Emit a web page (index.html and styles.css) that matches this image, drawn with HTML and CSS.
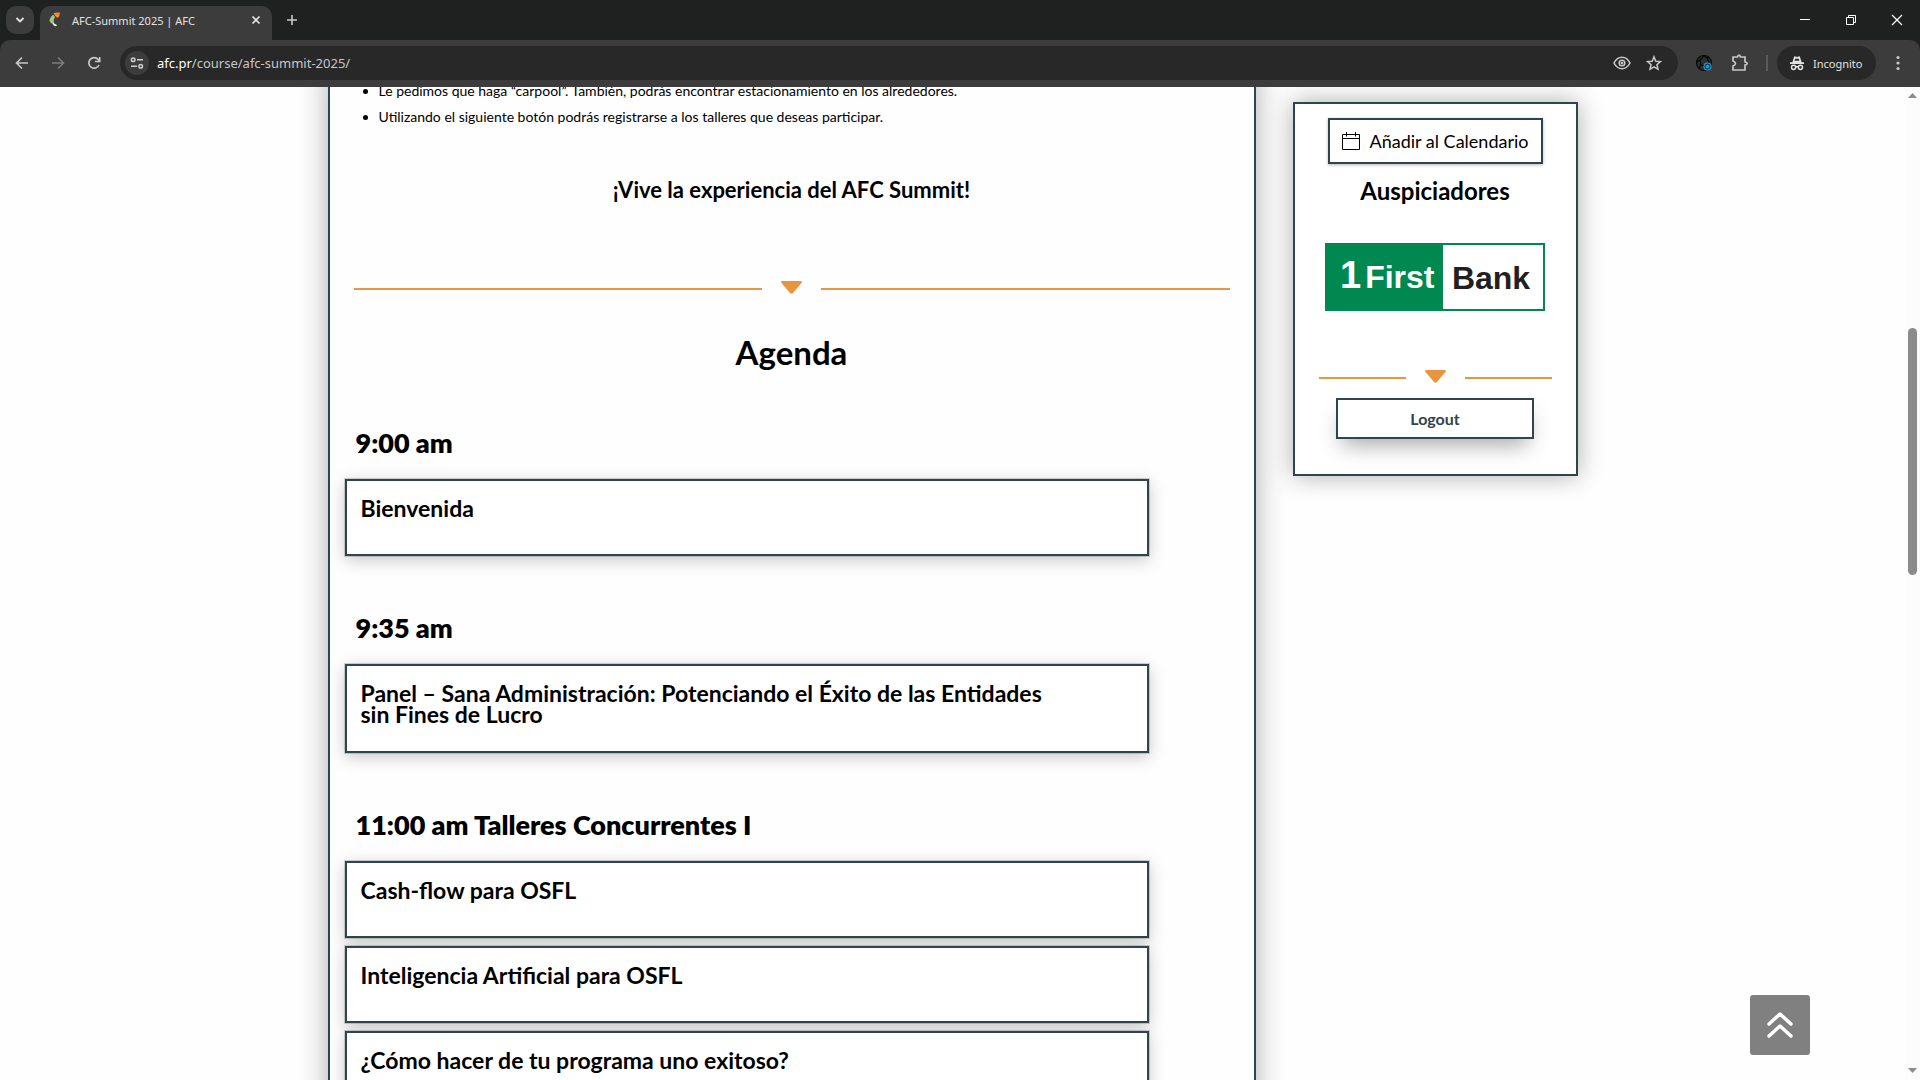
FILE: index.html
```html
<!DOCTYPE html>
<html lang="es">
<head>
<meta charset="utf-8">
<title>AFC-Summit 2025 | AFC</title>
<link rel="stylesheet" href="styles.css">
</head>
<body>
<header class="browser">
  <div class="tabs">
    <button class="tab-search" aria-label="Search tabs"><svg width="10" height="10" viewBox="0 0 10 10"><path d="M1.5 3l3.5 3.5L8.500 3" fill="none" stroke="#e3e3e3" stroke-width="1.8"/></svg></button>
    <div class="tab">
      <svg width="16" height="16" viewBox="0 0 16 16"><path d="M5.500 1.500Q7 0 11.800.5Q12 4.500 9.500 5.800Q8 5.500 5.500 1.500Z" fill="#f08c35"/><path d="M5 2.800Q8.200 5 5.800 7.500L5.500 12Q1.500 11 1.500 8Q2 5 5 2.800Z" fill="#a5c583"/><path d="M5 10Q6 12 9 13Q8 15 6 13.800Q4 12.500 5 10Z" fill="#fff"/></svg>
      <span class="tab-title">AFC-Summit 2025 | AFC</span>
      <button class="tab-close" aria-label="Close tab"><svg width="10" height="10" viewBox="0 0 10 10"><path d="M1.500 1.500l7 7m0-7l-7 7" stroke="#e3e3e3" stroke-width="1.700"/></svg></button>
    </div>
    <button class="new-tab" aria-label="New tab"><svg width="12" height="12" viewBox="0 0 12 12"><path d="M6 1v10M1 6h10" stroke="#c7c7c7" stroke-width="1.600"/></svg></button>
    <div class="window-buttons">
      <button aria-label="Minimize"><svg width="12" height="12" viewBox="0 0 12 12"><path d="M1 5.500h10" stroke="#fff"/></svg></button>
      <button aria-label="Restore"><svg width="12" height="12" viewBox="0 0 12 12"><path d="M1.500 3.500h7v7h-7zM3.500 3.500v-2h7v7h-2" fill="none" stroke="#fff"/></svg></button>
      <button aria-label="Close"><svg width="12" height="12" viewBox="0 0 12 12"><path d="M1 1l10 10M11 1L1 11" stroke="#fff" stroke-width="1.200"/></svg></button>
    </div>
  </div>
  <div class="toolbar">
    <button class="nav-button" aria-label="Back"><svg width="14" height="14" viewBox="0 0 14 14"><path d="M13 7H2M7 1.500L1.500 7L7 12.500" fill="none" stroke="#c7c7c7" stroke-width="1.700"/></svg></button>
    <button class="nav-button" aria-label="Forward"><svg width="14" height="14" viewBox="0 0 14 14"><path d="M1 7h11M7 1.500L12.500 7L7 12.500" fill="none" stroke="#7b7b7b" stroke-width="1.700"/></svg></button>
    <button class="nav-button" aria-label="Reload"><svg width="14" height="14" viewBox="0 0 14 14"><path d="M12 9A5.300 5.300 0 1 1 11.200 3.500L12.500 5M12.700 1v4.500H8" fill="none" stroke="#c7c7c7" stroke-width="1.700"/></svg></button>
    <div class="address">
      <button class="site-info" aria-label="Site information"><svg width="14" height="12" viewBox="0 0 14 12"><g fill="none" stroke="#d0d0d0" stroke-width="1.500"><circle cx="3.200" cy="2.700" r="1.800"/><path d="M7 2.700h6M1 9.300h6"/><circle cx="10.700" cy="9.300" r="1.800"/></g></svg></button>
      <div class="url" role="textbox" aria-label="Address" tabindex="0"><span class="url-host">afc.pr</span>/course/afc-summit-2025/</div>
      <button class="address-button" aria-label="Tracking protection"><svg width="18" height="14" viewBox="0 0 18 14"><g fill="none" stroke="#c7c7c7" stroke-width="1.600"><path d="M1 7Q4 1.300 9 1.300T17 7Q14 12.700 9 12.700T1 7Z"/><circle cx="9" cy="7" r="2.800"/></g><circle cx="9" cy="7" r="1.300" fill="#c7c7c7"/></svg></button>
      <button class="address-button" aria-label="Bookmark"><svg width="16" height="16" viewBox="0 0 16 16"><path d="M8 1.800l1.800 4.400 4.700.4-3.600 3.100 1.100 4.600L8 11.900l-4 2.400 1.100-4.600L1.500 6.600l4.700-.4z" fill="none" stroke="#c7c7c7" stroke-width="1.500"/></svg></button>
    </div>
    <button class="tool-button" aria-label="Extension"><svg width="18" height="18" viewBox="0 0 18 18"><circle cx="9" cy="9" r="7.500" fill="#2e3030" stroke="#080808" stroke-width="1.200"/><path d="M9 2L5 6l1 5 5 1 3-4-2-4zM2 8l3-2M6 11l-2 3M12 4l2-1" fill="none" stroke="#080808" stroke-width="1.200"/><circle cx="12.500" cy="12.500" r="4" fill="#16a5e0"/><circle cx="12.500" cy="12.500" r="2.400" fill="none" stroke="#12394c" stroke-width="1.200"/></svg></button>
    <button class="tool-button" aria-label="Extensions"><svg width="18" height="18" viewBox="0 0 18 18"><path d="M2 3h4.500q.3-1.800 1.500-1.800T9.500 3H14v5q2.200.3 2.200 1.500T14 11v5H2v-4q2.500-1 2.500-2.500T2 7z" fill="none" stroke="#c7c7c7" stroke-width="1.700"/></svg></button>
    <span class="separator"></span>
    <div class="incognito"><svg width="16" height="16" viewBox="0 0 16 16"><path d="M4.500 6.500L5.800 2.200l2.200.6 2.200-.6 1.300 4.300zM1 8.200h14" fill="none" stroke="#e3e3e3" stroke-width="1.700"/><g fill="none" stroke="#e3e3e3" stroke-width="1.500"><circle cx="4.600" cy="12.300" r="2.100"/><circle cx="11.400" cy="12.300" r="2.100"/><path d="M6.700 12q1.300-.8 2.600 0"/></g></svg>Incognito</div>
    <button class="menu-button" aria-label="Menu"><svg width="4" height="16" viewBox="0 0 4 16"><g fill="#c7c7c7"><circle cx="2" cy="2.500" r="1.600"/><circle cx="2" cy="8" r="1.600"/><circle cx="2" cy="13.500" r="1.600"/></g></svg></button>
  </div>
</header>
<div class="viewport">
  <div class="page">
    <main class="course">
      <ul class="notes">
        <li>Le pedimos que haga “carpool”. También, podrás encontrar estacionamiento en los alrededores.</li>
        <li>Utilizando el siguiente botón podrás registrarse a los talleres que deseas participar.</li>
      </ul>
      <p class="slogan">¡Vive la experiencia del AFC Summit!</p>
      <div class="divider"><svg width="21" height="13" viewBox="0 0 21 13"><path d="M1 0h19q1.500.5.500 2L12 12q-1.500 1.500-3 0L.5 2Q-.5.500 1 0z" fill="#e9953f"/></svg></div>
      <h1 class="agenda-title">Agenda</h1>
      <section class="slot">
        <h2>9:00 am</h2>
        <article class="session"><h3>Bienvenida</h3></article>
      </section>
      <section class="slot">
        <h2>9:35 am</h2>
        <article class="session"><h3>Panel – Sana Administración: Potenciando el Éxito de las Entidades sin Fines de Lucro</h3></article>
      </section>
      <section class="slot">
        <h2>11:00 am Talleres Concurrentes I</h2>
        <article class="session"><h3>Cash-flow para OSFL</h3></article>
        <article class="session"><h3>Inteligencia Artificial para OSFL</h3></article>
        <article class="session"><h3>¿Cómo hacer de tu programa uno exitoso?</h3></article>
      </section>
    </main>
    <aside class="sidebar">
      <button class="calendar-button"><svg width="18" height="18" viewBox="0 0 18 18"><path d="M.5 2.500h17v15H.5zM.5 6.500h17M4.500 0v4.500M13.500 0v4.500" fill="none" stroke="#000"/></svg>Añadir al Calendario</button>
      <h2 class="sponsors-title">Auspiciadores</h2>
      <a class="sponsor" href="#"><span class="sponsor-first"><span class="sponsor-one">1</span>First</span><span class="sponsor-bank">Bank</span></a>
      <div class="divider"><svg width="21" height="13" viewBox="0 0 21 13"><path d="M1 0h19q1.500.5.500 2L12 12q-1.500 1.500-3 0L.5 2Q-.5.500 1 0z" fill="#e9953f"/></svg></div>
      <button class="logout-button">Logout</button>
    </aside>
  </div>
  <div class="scrollbar">
    <svg width="9" height="5" viewBox="0 0 9 5"><path d="M0 5L4.500 0L9 5z" fill="#8b8b8b"/></svg>
    <div class="scroll-thumb"></div>
    <svg width="9" height="5" viewBox="0 0 9 5"><path d="M0 0h9L4.500 5z" fill="#8b8b8b"/></svg>
  </div>
  <button class="to-top" aria-label="Volver arriba"><svg width="26" height="26" viewBox="0 0 26 26"><path d="M2 12L13 2l11 10M2 24l11-10 11 10" fill="none" stroke="#fff" stroke-width="3.500" stroke-linecap="round" stroke-linejoin="round"/></svg></button>
</div>
</body>
</html>
```
FILE: styles.css
```css
* { box-sizing: border-box; }

body {
  margin: 0;
  height: 100vh;
  display: flex;
  flex-direction: column;
  overflow: hidden;
  background: #fefefe;
  color: #000;
  font-family: Lato, sans-serif;
}

button { border: 0; padding: 0; background: none; font: inherit; color: inherit; }
svg { display: block; flex: none; }
h1, h2, h3, p, ul { margin: 0; padding: 0; }

/* Browser frame */
.browser {
  flex: none;
  background: #1f2120;
  color: #e3e3e3;
  font-family: "Noto Sans", sans-serif;
  font-size: 11px;
}

.tabs { display: flex; height: 40px; padding: 6px 0 0 6px; }

.tabs button, .toolbar button { display: flex; align-items: center; justify-content: center; }

.tabs .tab-search { width: 28px; height: 28px; margin-right: 6px; border-radius: 10px; background: #3c3c3c; }

.tab {
  display: flex;
  align-items: center;
  gap: 8px;
  width: 232px;
  padding: 0 10px 6px 8px;
  border-radius: 10px 10px 0 0;
  background: #3c3c3c;
}

.tab-title { flex: 1; white-space: nowrap; }
.tab-close { width: 12px; height: 16px; }
.new-tab { width: 40px; height: 28px; }
.window-buttons { display: flex; margin-left: auto; }
.window-buttons button { width: 46px; height: 28px; }

.toolbar {
  display: flex;
  align-items: center;
  height: 47px;
  padding: 0 12px 1px 4px;
  border-radius: 10px 10px 0 0;
  background: #3c3c3c;
}

.nav-button { width: 36px; height: 34px; }

.address {
  flex: 1;
  display: flex;
  align-items: center;
  height: 34px;
  margin: 0 12px 0 8px;
  padding: 0 12px 0 5px;
  border-radius: 17px;
  background: #282828;
}

.site-info { width: 24px; height: 24px; border-radius: 12px; background: #3c3c3c; }
.url { flex: 1; margin-left: 8px; font-size: 13px; color: #c7c7c7; }
.url-host { color: #fff; }
.address-button { width: 24px; height: 24px; margin-left: 8px; }
.tool-button { width: 28px; height: 28px; margin-right: 8px; }
.separator { width: 2px; height: 16px; margin: 0 9px 0 4px; background: #5a5a5a; }

.incognito {
  display: flex;
  align-items: center;
  gap: 8px;
  width: 99px;
  height: 34px;
  padding-left: 12px;
  border-radius: 17px;
  background: #282828;
}

.menu-button { width: 20px; height: 28px; margin-left: 12px; }

/* Page */
.viewport { flex: 1; min-height: 0; display: flex; position: relative; overflow: hidden; }

.page {
  flex: 1;
  display: flex;
  align-items: flex-start;
  justify-content: center;
  gap: 37px;
}

.course {
  flex: 0 1 928px;
  margin-top: -17px;
  padding: 6px 15px 20px;
  border: 2px solid #30444b;
  background: #fefefe;
  box-shadow: 0 0 28px rgba(0, 0, 0, .32);
}

.notes { padding-left: 34px; font-size: 14px; line-height: 26px; }

.slogan { margin-top: 44px; font-size: 22px; font-weight: 700; line-height: 32px; text-align: center; }

.divider { display: flex; align-items: center; gap: 19px; }
.divider::before, .divider::after { content: ""; flex: 1; height: 2px; margin-top: 3px; background: #e9953f; }
.course .divider { margin: 75px 9px 0; }

.agenda-title { margin-top: 38px; font-size: 33px; line-height: 40px; text-align: center; }

.slot { padding-top: 46px; }
.agenda-title + .slot { padding-top: 53px; }
.slot h2 { margin: 0 11px 19px; font-size: 27px; font-weight: 800; line-height: 35px; }

.session {
  max-width: 804px;
  min-height: 77px;
  margin-bottom: 8px;
  padding: 17px 104px 26px 14px;
  border: 2px solid #30444b;
  background: #fff;
  box-shadow: 0 0 0 1px rgba(0, 0, 0, .16), 0 4px 16px rgba(0, 0, 0, .22);
}

.session h3 { font-size: 23px; font-weight: 700; line-height: 21px; }

.sidebar {
  flex: 0 0 285px;
  display: flex;
  flex-direction: column;
  align-items: center;
  margin-top: 15px;
  padding: 14px 24px 35px;
  border: 2px solid #30444b;
  background: #fff;
  box-shadow: 0 0 24px rgba(0, 0, 0, .32);
}

.calendar-button {
  display: flex;
  align-items: center;
  gap: 10px;
  height: 46px;
  padding: 0 12px;
  border: 2px solid #30444b;
  font-size: 18px;
  white-space: nowrap;
  box-shadow: 0 1px 3px rgba(40, 40, 80, .35);
}

.sponsors-title { margin-top: 11px; font-size: 24px; line-height: 32px; }

.sponsor {
  display: flex;
  width: 220px;
  height: 68px;
  margin-top: 36px;
  border: 2px solid #008851;
  color: #231f20;
  font: bold 32px/66px "Liberation Sans", Arial, sans-serif;
  text-decoration: none;
}

.sponsor-first { width: 116px; padding-left: 13px; background: #008851; color: #fff; line-height: 60px; white-space: nowrap; }
.sponsor-one { margin-right: 4px; font-size: 38px; }
.sponsor-bank { flex: 1; padding-right: 4px; text-align: center; }

.sidebar .divider { align-self: stretch; margin: 59px 0 15px; }

.logout-button {
  width: 198px;
  height: 41px;
  border: 2px solid #30444b;
  background: #fff;
  color: #30444b;
  font-size: 16px;
  font-weight: 700;
  box-shadow: 0 12px 22px -6px rgba(0, 0, 0, .35);
}

.scrollbar {
  flex: none;
  display: flex;
  flex-direction: column;
  align-items: center;
  width: 15px;
  padding: 6px 0 7px;
  background: #fcfcfc;
}

.scroll-thumb { width: 9px; height: 247px; margin: 230px 0 auto; border-radius: 5px; background: #8b8b8b; }

.to-top {
  position: absolute;
  right: 110px;
  bottom: 25px;
  display: flex;
  align-items: center;
  justify-content: center;
  width: 60px;
  height: 60px;
  border-radius: 3px;
  background: #808080;
}
```
